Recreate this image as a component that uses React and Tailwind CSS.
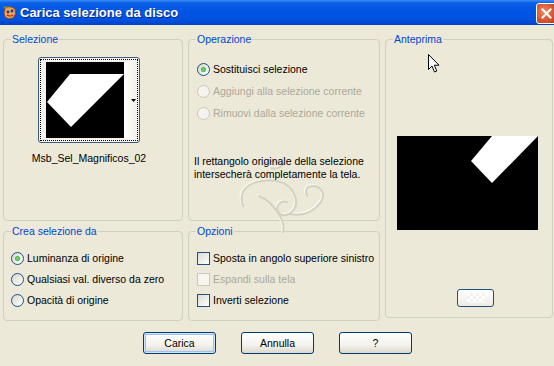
import React from 'react';

function Radio({ checked, disabled }) {
  return (
    <span
      className={
        disabled
          ? 'w-[13px] h-[13px] rounded-full border border-[#cac8bb] bg-[#f4f3ee] shrink-0'
          : 'w-[13px] h-[13px] rounded-full border border-[#1c5180] bg-[linear-gradient(135deg,#d8d6cc,#ffffff)] shrink-0 flex items-center justify-center'
      }
    >
      {checked ? <span className="w-[5px] h-[5px] rounded-full bg-[radial-gradient(circle,#7ee07e,#21a121)]" /> : null}
    </span>
  );
}

function Check({ disabled }) {
  return (
    <span
      className={
        disabled
          ? 'w-[13px] h-[13px] border border-[#cac8bb] bg-[#f6f5f0] shrink-0'
          : 'w-[13px] h-[13px] border border-[#1c5180] bg-[linear-gradient(135deg,#dcdcd4,#ffffff)] shrink-0'
      }
    />
  );
}

function Group({ title, className, children }) {
  return (
    <fieldset className={'border border-[#d0d0bf] rounded-[4px] min-w-0 ' + className}>
      <legend className="ml-[7px] px-[1px] text-[#0046d5] leading-[13px]">{title}</legend>
      {children}
    </fieldset>
  );
}

function Button({ children, main }) {
  return (
    <button
      className={
        'w-[73px] h-[22px] rounded-[3px] border border-[#003c74] bg-[linear-gradient(to_bottom,#ffffff,#f3f2ec_60%,#dcd8cc)] text-black leading-[13px] ' +
        (main ? 'shadow-[inset_0_0_0_1px_#cee7ff,inset_0_0_0_2px_#9fc0ef]' : '')
      }
    >
      {children}
    </button>
  );
}

export default function App() {
  return (
    <div className="relative w-[554px] h-[366px] overflow-hidden bg-[#ece9d8] font-['Liberation_Sans',Arial,sans-serif] text-[10.5px] leading-[13px] text-black">
      {/* title bar */}
      <div className="h-[25px] flex items-center bg-[linear-gradient(to_bottom,#3d8cf6_0%,#0a5fe6_12%,#0055e4_45%,#0052de_80%,#0040c8_100%)]">
        <svg width="16" height="16" viewBox="0 0 16 16" className="ml-[2px] shrink-0">
          <path d="M3 3 Q8 0 13 4 Q15 9 11 13 Q6 15 3 12 Q1 8 3 3 Z" fill="#e9a45a" stroke="#8a4a1c" strokeWidth="1" />
          <circle cx="6" cy="7" r="1.4" fill="#2a3a8a" />
          <circle cx="10" cy="6" r="1.4" fill="#2a3a8a" />
          <path d="M5 10 Q8 12 11 10" stroke="#b02020" strokeWidth="1.2" fill="none" />
          <path d="M1 2 L5 1 L4 4 Z" fill="#4fa84f" />
        </svg>
        <span className="ml-[2px] text-white font-bold text-[13px] [text-shadow:1px_1px_0_#0a2a8c]">Carica selezione da disco</span>
        <span className="ml-auto -mr-[3px] mt-[1px] w-[21px] h-[21px] shrink-0 rounded-[3px] border border-white bg-[radial-gradient(circle_at_40%_40%,#ef8a6a,#d5512d_60%,#b83a18)] flex items-center justify-center">
          <svg width="11" height="11" viewBox="0 0 11 11">
            <path d="M1.5 1.5 L9.5 9.5 M9.5 1.5 L1.5 9.5" stroke="#fff" strokeWidth="2" strokeLinecap="square" />
          </svg>
        </span>
      </div>

      {/* groups */}
      <div className="pt-[8px] pl-[3px] grid grid-cols-[180px_192px_168px] grid-rows-[188px_96px] gap-x-[5px] gap-y-[4px]">
        <Group title="Selezione" className="h-[188px]">
          <div className="ml-[27px] w-[116px] mt-[11px] flex flex-col items-center">
            <div className="w-[102px] h-[86px] rounded-[3px] border border-[#3d5a7e] bg-[#f4f3ee] p-[1px]">
              <div className="w-full h-full border border-dotted border-black flex pl-[5px] pt-[2px] pb-[1px]">
                <svg width="78" height="76" viewBox="0 0 78 76" className="shrink-0">
                  <rect width="78" height="76" fill="#000" />
                  <polygon points="24,12 78,12 25,65 1,40" fill="#fff" />
                </svg>
                <div className="flex-1 bg-[linear-gradient(to_right,#ffffff,#f2f1ea)] flex items-center justify-end pr-[1px]">
                  <svg width="5" height="3" viewBox="0 0 5 3">
                    <polygon points="0,0 5,0 2.5,3" fill="#000" />
                  </svg>
                </div>
              </div>
            </div>
            <div className="mt-[9px] whitespace-nowrap">Msb_Sel_Magnificos_02</div>
          </div>
        </Group>

        <Group title="Operazione" className="h-[188px] relative">
          <div className="pl-[8px] pt-[12px] flex flex-col">
            <div className="h-[22px] flex items-center gap-[3px]">
              <Radio checked />
              <span>Sostituisci selezione</span>
            </div>
            <div className="h-[22px] flex items-center gap-[3px] text-[#aca899]">
              <Radio disabled />
              <span>Aggiungi alla selezione corrente</span>
            </div>
            <div className="h-[22px] flex items-center gap-[3px] text-[#aca899]">
              <Radio disabled />
              <span>Rimuovi dalla selezione corrente</span>
            </div>
          </div>
          <p className="pl-[5px] mt-[31px] relative z-10">
            Il rettangolo originale della selezione
            <br />
            intersecherà completamente la tela.
          </p>
          {/* watermark */}
          <svg width="110" height="80" viewBox="0 0 110 80" className="absolute left-[34px] top-[110px]">
            <g fill="none" strokeLinecap="round">
              <g stroke="#f8f7f1" strokeWidth="2.2" transform="translate(-1 -1)">
                <path d="M40 8 Q50 2 60 8 Q56 14 48 12" />
                <path d="M20 50 Q14 32 34 26 Q60 20 70 36 Q78 50 66 58 Q56 62 54 52 Q56 44 64 46" />
                <path d="M36 40 Q48 44 58 62 Q62 72 60 76" />
                <path d="M66 58 Q86 62 98 46 Q104 34 92 30 Q80 30 84 40" />
              </g>
              <g stroke="#d5d1bf" strokeWidth="2">
                <path d="M40 8 Q50 2 60 8 Q56 14 48 12" />
                <path d="M20 50 Q14 32 34 26 Q60 20 70 36 Q78 50 66 58 Q56 62 54 52 Q56 44 64 46" />
                <path d="M36 40 Q48 44 58 62 Q62 72 60 76" />
                <path d="M66 58 Q86 62 98 46 Q104 34 92 30 Q80 30 84 40" />
              </g>
            </g>
          </svg>
        </Group>

        <Group title="Anteprima" className="row-span-2 h-[285px] self-start">
          <svg width="141" height="94" viewBox="0 0 141 94" className="ml-[11px] mt-[90px] block">
            <rect width="141" height="94" fill="#000" />
            <polygon points="95,0 141,0 95,47 74,25" fill="#fff" />
          </svg>
          <div className="ml-[71px] mt-[59px] w-[37px] h-[18px] rounded-[3px] border border-[#1c5180] bg-[linear-gradient(to_bottom,#ffffff,#ecebe4)] flex items-center justify-center">
            <div className="w-[18px] h-[10px] bg-[repeating-conic-gradient(#f2f2ee_0%_25%,#ffffff_0%_50%)] bg-[length:6px_6px]" />
          </div>
        </Group>

        <Group title="Crea selezione da" className="h-[96px]">
          <div className="pl-[7px] pt-[10px] flex flex-col">
            <div className="h-[21px] flex items-center gap-[3px]">
              <Radio checked />
              <span>Luminanza di origine</span>
            </div>
            <div className="h-[21px] flex items-center gap-[3px]">
              <Radio />
              <span>Qualsiasi val. diverso da zero</span>
            </div>
            <div className="h-[21px] flex items-center gap-[3px]">
              <Radio />
              <span>Opacità di origine</span>
            </div>
          </div>
        </Group>

        <Group title="Opzioni" className="h-[96px]">
          <div className="pl-[8px] pt-[10px] flex flex-col">
            <div className="h-[21px] flex items-center gap-[3px]">
              <Check />
              <span>Sposta in angolo superiore sinistro</span>
            </div>
            <div className="h-[21px] flex items-center gap-[3px] text-[#aca899]">
              <Check disabled />
              <span>Espandi sulla tela</span>
            </div>
            <div className="h-[21px] flex items-center gap-[3px]">
              <Check />
              <span>Inverti selezione</span>
            </div>
          </div>
        </Group>
      </div>

      {/* buttons */}
      <div className="mt-[11px] pl-[143px] flex gap-[25px]">
        <Button main>Carica</Button>
        <Button>Annulla</Button>
        <Button>?</Button>
      </div>

      {/* mouse pointer */}
      <svg width="13" height="20" viewBox="0 0 13 20" className="absolute left-[428px] top-[54px]">
        <path d="M0.5 0.5 L0.5 15.5 L4 12 L6.5 18 L8.8 17 L6.3 11.2 L11 11.2 Z" fill="#fff" stroke="#000" strokeWidth="1" strokeLinejoin="miter" />
      </svg>
    </div>
  );
}
